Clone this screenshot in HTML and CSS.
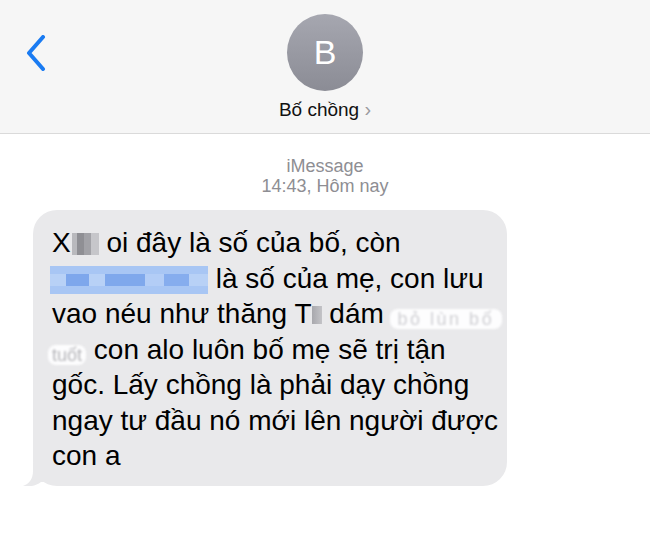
FILE: index.html
```html
<!DOCTYPE html>
<html lang="vi">
<head>
    <meta charset="UTF-8">
    <meta name="viewport" content="width=device-width, initial-scale=1.0">
    <title>Bố chồng</title>
    <link rel="stylesheet" href="styles.css">
</head>
<body>
    <header class="topbar">
        <div class="back">
            <svg width="20" height="36" viewBox="0 0 20 36">
                <path d="M17 2 L3 18 L17 34" fill="none" stroke="#1a7bf2" stroke-width="4" stroke-linecap="round" stroke-linejoin="round"/>
            </svg>
        </div>
        <div class="contact">
            <div class="avatar">B</div>
            <div class="name">Bố chồng <span class="more">&#8250;</span></div>
        </div>
        <div></div>
    </header>

    <main class="thread">
        <div class="meta">
            <div>iMessage</div>
            <div>14:43, Hôm nay</div>
        </div>

        <div class="bubble">
            <p class="text">X<span class="mosaic gray"></span> oi đây là số của bố, còn<br><span class="mosaic blue"></span> là số của mẹ, con lưu<br>vao néu như thăng T<span class="mosaic small"></span> dám <span class="smudge wide">bỏ lùn bố</span><br><span class="smudge">tuốt</span> con alo luôn bố mẹ sẽ trị tận<br>gốc. Lấy chồng là phải dạy chồng<br>ngay tư đầu nó mới lên người được<br>con a</p>
            <svg class="tail" width="24" height="24" viewBox="0 0 24 24">
                <path d="M10 0 L10 8 C10 16 6 21 0 23 C6 24 13 23 18 19 L24 19 L24 0 Z" fill="#e9e9eb"/>
            </svg>
        </div>
    </main>
</body>
</html>
```

FILE: styles.css
```css
body {
    margin: 0;
    background: #fff;
    font-family: "Liberation Sans", Arial, sans-serif;
    color: #000;
}

.topbar {
    display: grid;
    grid-template-columns: 1fr auto 1fr;
    height: 134px;
    background: #f6f6f6;
    border-bottom: 1px solid #dadada;
    box-sizing: border-box;
}
.back {
    padding: 35px 0 0 26px;
}
.contact {
    display: flex;
    flex-direction: column;
    align-items: center;
    padding-top: 14px;
}
.avatar {
    width: 76px;
    height: 77px;
    border-radius: 50%;
    background: linear-gradient(#a6a7b0, #8b8c95);
    color: #fff;
    font-size: 34px;
    display: flex;
    align-items: center;
    justify-content: center;
}
.name {
    margin-top: 6px;
    font-size: 19px;
    line-height: 24px;
    color: #111;
}
.more {
    color: #9a9a9f;
    font-size: 20px;
}

.thread {
    display: flex;
    flex-direction: column;
    align-items: flex-start;
    padding: 22px 0 0 33px;
}
.meta {
    align-self: center;
    margin-left: -33px;
    text-align: center;
    color: #8e8e93;
    font-size: 18px;
    line-height: 20px;
}
.bubble {
    position: relative;
    margin-top: 14px;
    width: 474px;
    box-sizing: border-box;
    padding: 15px 6px 12px 19px;
    background: #e9e9eb;
    border-radius: 24px;
}
.text {
    margin: 0;
    font-size: 28px;
    line-height: 35.5px;
    white-space: nowrap;
}
.tail {
    position: absolute;
    left: -10px;
    bottom: -1px;
}

.mosaic {
    display: inline-block;
    vertical-align: -3px;
}
.mosaic.gray {
    width: 27px;
    height: 22px;
    margin-left: 1px;
    background:
        linear-gradient(90deg, #b9b9bd 0 20%, #8f8f94 20% 45%, #a2a2a7 45% 70%, #c6c6ca 70% 100%);
}
.mosaic.blue {
    width: 158px;
    height: 28px;
    vertical-align: -6px;
    margin-left: -2px;
    background:
        linear-gradient(#a8c6f4 0 30%, transparent 30% 70%, #a8c6f4 70%),
        linear-gradient(90deg, #b8d1f6 0 10%, #7ea7ec 10% 25%, #b8d1f6 25% 35%, #7fa8ec 35% 60%, #b3cdf6 60% 72%, #86adee 72% 88%, #b8d1f6 88%);
}
.mosaic.small {
    width: 10px;
    height: 18px;
    vertical-align: -1px;
    background: linear-gradient(90deg, #a8a8ad, #c3c3c7);
}
.smudge {
    display: inline-block;
    padding: 0 4px;
    margin-left: -4px;
    vertical-align: -2px;
    background: #fdfdfe;
    color: #b4b4b8;
    filter: blur(1px);
    font-size: 18px;
    line-height: 20px;
    border-radius: 8px;
}
.smudge.wide {
    padding: 0 8px;
    margin-left: -2px;
    letter-spacing: 2.5px;
    color: #cfcfd3;
}
```
